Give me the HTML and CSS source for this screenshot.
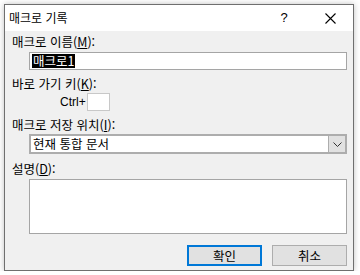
FILE: index.html
```html
<!DOCTYPE html>
<html lang="ko">
<head>
    <meta charset="UTF-8">
    <title>매크로 기록</title>
    <link rel="stylesheet" href="styles.css">
</head>
<body>
    <div class="window">
        <div class="title-bar">
            <span class="title">매크로 기록</span>
            <span class="help-button">?</span>
            <span class="close-button">
                <svg width="11" height="11" viewBox="0 0 11 11">
                    <path d="M0.5 0.5 L10.5 10.5 M10.5 0.5 L0.5 10.5" stroke="#000" stroke-width="1.1" fill="none"/>
                </svg>
            </span>
        </div>

        <div class="content">
            <div class="label">매크로 이름(<u>M</u>):</div>
            <div class="field name-field"><span class="selected">매크로1</span></div>

            <div class="label gap">바로 가기 키(<u>K</u>):</div>
            <div class="shortcut-row">
                <span class="ctrl">Ctrl+</span>
                <span class="key-box"></span>
            </div>

            <div class="label gap">매크로 저장 위치(<u>I</u>):</div>
            <div class="field select-field">
                <span class="select-text">현재 통합 문서</span>
                <span class="select-arrow">
                    <svg width="9" height="5" viewBox="0 0 9 5">
                        <path d="M0.5 0.5 L4.5 4.5 L8.5 0.5" stroke="#333" stroke-width="1" fill="none"/>
                    </svg>
                </span>
            </div>

            <div class="label gap-big">설명(<u>D</u>):</div>
            <div class="field desc-field"></div>

            <div class="buttons">
                <div class="button default">확인</div>
                <div class="button">취소</div>
            </div>
        </div>
    </div>
</body>
</html>
```

FILE: styles.css
```css
body {
    margin: 0;
    background: #fff;
    font-family: "Noto Sans CJK KR", "Noto Sans", sans-serif;
    font-size: 12px;
    color: #000;
}
.window {
    margin: 4px 0 0 4px;
    width: 348px;
    height: 265px;
    border: 1px solid #6f6f6f;
    background: #f0f0f0;
    box-shadow: 0 0 6px rgba(0, 0, 0, 0.25);
    display: flex;
    flex-direction: column;
}
.title-bar {
    height: 26px;
    background: #fff;
    display: flex;
    align-items: center;
}
.title {
    flex: 1;
    padding-left: 4px;
    line-height: 16px;
}
.help-button {
    width: 46px;
    text-align: center;
    line-height: 16px;
    font-family: "Liberation Sans", sans-serif;
    font-size: 13px;
}
.close-button {
    width: 46px;
    display: flex;
    justify-content: center;
    align-items: center;
}
.content {
    padding: 3px 6px 0 7px;
    display: flex;
    flex-direction: column;
    font-size: 12.5px;
}
.label {
    line-height: 16px;
    height: 16px;
}
.label u {
    text-underline-offset: 1px;
}
.label.gap {
    margin-top: 6px;
}
.label.gap-big {
    margin-top: 7px;
}
.field {
    margin-left: 17px;
    background: #fff;
    border: 1px solid #a5a5a5;
    box-sizing: border-box;
}
.name-field {
    margin-top: 2px;
    height: 18px;
    display: flex;
    align-items: center;
    padding-left: 2px;
}
.selected {
    background: #000;
    color: #fff;
    line-height: 14px;
    padding: 0 1px;
}
.shortcut-row {
    margin-top: 1px;
    height: 18px;
    display: flex;
    align-items: center;
    padding-left: 48px;
}
.ctrl {
    font-family: "Liberation Sans", sans-serif;
    font-size: 12px;
    margin-right: 1px;
}
.key-box {
    width: 23px;
    height: 18px;
    background: #fff;
    border: 1px solid #c8c8c8;
    box-sizing: border-box;
}
.select-field {
    margin-top: 1px;
    height: 20px;
    display: flex;
    align-items: stretch;
    border-width: 2px;
    border-color: #adadad;
}
.select-text {
    flex: 1;
    padding-left: 2px;
    line-height: 16px;
}
.select-arrow {
    width: 16px;
    background: #e1e1e1;
    border-left: 1px solid #adadad;
    display: flex;
    justify-content: center;
    align-items: center;
}
.desc-field {
    margin-top: 2px;
    height: 55px;
}
.buttons {
    margin-top: 11px;
    display: flex;
    justify-content: flex-end;
    gap: 10px;
}
.button {
    width: 75px;
    height: 21px;
    box-sizing: border-box;
    background: #e1e1e1;
    border: 1px solid #adadad;
    text-align: center;
    line-height: 19px;
}
.button.default {
    border: 2px solid #0078d7;
    line-height: 17px;
}
```
